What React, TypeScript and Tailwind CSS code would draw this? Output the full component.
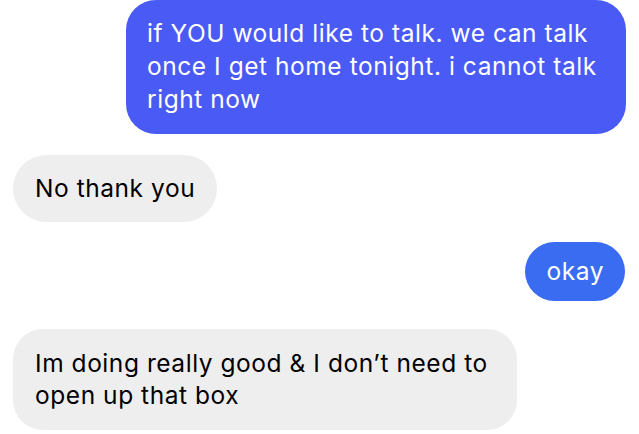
import React from "react";

export default function App() {
  return (
    <div
      className="w-[639px] h-[434px] overflow-hidden bg-white flex flex-col text-[24.5px] tracking-[0.55px]"
      style={{ fontFamily: "Inter, 'Noto Sans', sans-serif" }}
    >
      <div className="flex justify-end pr-[13px]">
        <div className="w-[500px] rounded-[30px] bg-[#4a5af5] text-white leading-[33px] pl-[21px] pr-2 pt-[17px] pb-[18px]">
          if YOU would like to talk. we can talk
          <br />
          once I get home tonight. i cannot talk
          <br />
          right now
        </div>
      </div>
      <div className="flex justify-start pl-[13px] mt-[21px]">
        <div className="rounded-full bg-[#eeeeee] text-black leading-[33px] px-[22px] py-[17px]">
          No thank you
        </div>
      </div>
      <div className="flex justify-end pr-[14px] mt-[20px]">
        <div className="rounded-full bg-[#3a6cf2] text-white leading-[33px] px-[21px] py-[13px]">
          okay
        </div>
      </div>
      <div className="flex justify-start pl-[13px] mt-[28px]">
        <div className="w-[504px] rounded-[30px] bg-[#eeeeee] text-black leading-[32px] pl-[22px] pr-2 pt-[18px] pb-[19px]">
          Im doing really good &amp; I don’t need to
          <br />
          open up that box
        </div>
      </div>
    </div>
  );
}
